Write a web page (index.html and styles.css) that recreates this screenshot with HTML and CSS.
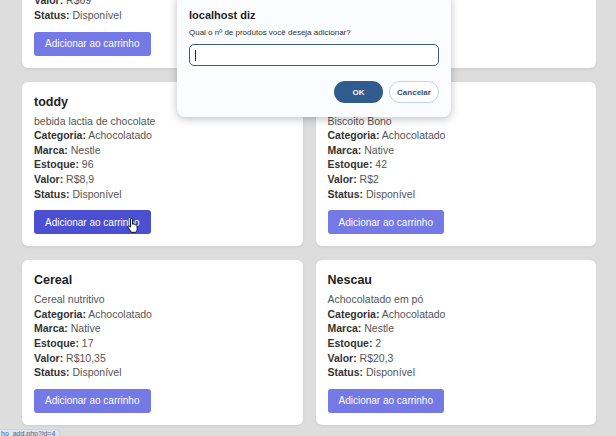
FILE: index.html
```html
<!DOCTYPE html>
<html lang="pt-BR">
<head>
<meta charset="utf-8">
<title>Produtos</title>
<link rel="stylesheet" href="styles.css">
</head>
<body>
<main class="grid">
  <article class="card">
    <h3 class="title">Leite</h3>
    <p class="line">Leite integral</p>
    <p class="line"><b>Categoria:</b> Laticínio</p>
    <p class="line"><b>Marca:</b> Nestle</p>
    <p class="line"><b>Estoque:</b> 10</p>
    <p class="line"><b>Valor:</b> R$69</p>
    <p class="line"><b>Status:</b> Disponível</p>
    <button class="btn">Adicionar ao carrinho</button>
  </article>
  <article class="card">
    <h3 class="title">Café</h3>
    <p class="line">Café torrado</p>
    <p class="line"><b>Categoria:</b> Café</p>
    <p class="line"><b>Marca:</b> Native</p>
    <p class="line"><b>Estoque:</b> 5</p>
    <p class="line"><b>Valor:</b> R$9</p>
    <p class="line"><b>Status:</b> Disponível</p>
    <button class="btn">Adicionar ao carrinho</button>
  </article>
  <article class="card">
    <h3 class="title">toddy</h3>
    <p class="line">bebida lactia de chocolate</p>
    <p class="line"><b>Categoria:</b> Achocolatado</p>
    <p class="line"><b>Marca:</b> Nestle</p>
    <p class="line"><b>Estoque:</b> 96</p>
    <p class="line"><b>Valor:</b> R$8,9</p>
    <p class="line"><b>Status:</b> Disponível</p>
    <button class="btn btn-hover">Adicionar ao carrinho</button>
  </article>
  <article class="card">
    <h3 class="title">Bono</h3>
    <p class="line">Biscoito Bono</p>
    <p class="line"><b>Categoria:</b> Achocolatado</p>
    <p class="line"><b>Marca:</b> Native</p>
    <p class="line"><b>Estoque:</b> 42</p>
    <p class="line"><b>Valor:</b> R$2</p>
    <p class="line"><b>Status:</b> Disponível</p>
    <button class="btn">Adicionar ao carrinho</button>
  </article>
  <article class="card">
    <h3 class="title">Cereal</h3>
    <p class="line">Cereal nutritivo</p>
    <p class="line"><b>Categoria:</b> Achocolatado</p>
    <p class="line"><b>Marca:</b> Native</p>
    <p class="line"><b>Estoque:</b> 17</p>
    <p class="line"><b>Valor:</b> R$10,35</p>
    <p class="line"><b>Status:</b> Disponível</p>
    <button class="btn">Adicionar ao carrinho</button>
  </article>
  <article class="card">
    <h3 class="title">Nescau</h3>
    <p class="line">Achocolatado em pó</p>
    <p class="line"><b>Categoria:</b> Achocolatado</p>
    <p class="line"><b>Marca:</b> Nestle</p>
    <p class="line"><b>Estoque:</b> 2</p>
    <p class="line"><b>Valor:</b> R$20,3</p>
    <p class="line"><b>Status:</b> Disponível</p>
    <button class="btn">Adicionar ao carrinho</button>
  </article>
</main>

<div class="dialog">
  <div class="dlg-title">localhost diz</div>
  <div class="dlg-text">Qual o nº de produtos você deseja adicionar?</div>
  <div class="dlg-input"><span class="caret"></span></div>
  <div class="dlg-actions">
    <button class="dlg-ok">OK</button>
    <button class="dlg-cancel">Cancelar</button>
  </div>
</div>

<svg class="cursor" width="12" height="15" viewBox="0 0 12 15">
  <path d="M3.5 1.2c0-.6.4-1 1-1s1 .4 1 1v5l.3-.1c.5-.3 1.1-.1 1.4.3.5-.3 1.1-.1 1.4.4.5-.2 1.1 0 1.3.5l.3 3.2c0 1.5-.6 2.8-1.6 3.8H4.3L1.2 9.5c-.3-.5-.2-1.1.3-1.4.4-.3 1-.2 1.3.2l.7.9z" fill="#fff" stroke="#000" stroke-width=".9" stroke-linejoin="round"/>
</svg>

<div class="status">ho_add.php?id=4</div>
</body>
</html>
```

FILE: styles.css
```css
* { box-sizing: border-box; }

html, body {
  margin: 0;
  padding: 0;
  height: 100%;
  overflow: hidden;
}

body {
  background: #dddddd;
  font-family: "Liberation Sans", Arial, sans-serif;
  color: #333;
  position: relative;
}

.grid {
  display: grid;
  grid-template-columns: 1fr 1fr;
  column-gap: 13px;
  row-gap: 14px;
  padding: 0 20px 0 22px;
  margin-top: -97px;
}

.card {
  background: #fff;
  border-radius: 6px;
  padding: 12px;
  box-shadow: 0 1px 3px rgba(0, 0, 0, 0.08);
}

.title {
  margin: 0 0 4px;
  font-size: 12.5px;
  line-height: 16px;
  font-weight: bold;
  color: #222;
}

.line {
  margin: 0;
  font-size: 10.5px;
  line-height: 14.6px;
  color: #555;
}

.line b {
  color: #333;
}

.btn {
  display: block;
  margin-top: 9px;
  height: 24px;
  padding: 0 11px;
  border: none;
  border-radius: 3px;
  background: #7479e6;
  color: #fff;
  font-family: "Liberation Sans", Arial, sans-serif;
  font-size: 10px;
}

.btn-hover {
  background: #4b4fd1;
}

.dialog {
  position: absolute;
  left: 177px;
  top: -8px;
  width: 274px;
  background: #fbfcfe;
  border-radius: 8px;
  box-shadow: 0 2px 8px rgba(0, 0, 0, 0.25);
  padding: 16px 12px 14px;
  display: flex;
  flex-direction: column;
}

.dlg-title {
  font-size: 11px;
  line-height: 14px;
  font-weight: bold;
  color: #222;
}

.dlg-text {
  margin-top: 6px;
  font-size: 8px;
  line-height: 10px;
  color: #333;
}

.dlg-input {
  margin-top: 6px;
  height: 22px;
  width: 250px;
  border: 1.5px solid #3d5b87;
  border-radius: 5px;
  background: #fff;
  display: flex;
  align-items: center;
  padding-left: 5px;
}

.caret {
  width: 1px;
  height: 11px;
  background: #222;
}

.dlg-actions {
  margin-top: 15px;
  display: flex;
  justify-content: flex-end;
  gap: 6px;
}

.dlg-ok,
.dlg-cancel {
  height: 22px;
  border-radius: 11px;
  font-family: "Liberation Sans", Arial, sans-serif;
  font-size: 8px;
  font-weight: bold;
  padding: 0;
}

.dlg-ok {
  width: 49px;
  background: #2f5b8e;
  color: #fff;
  border: none;
}

.dlg-cancel {
  width: 50px;
  background: #fff;
  color: #2f4f78;
  border: 1px solid #c3d2ea;
}

.cursor {
  position: absolute;
  left: 127px;
  top: 218px;
}

.status {
  position: absolute;
  left: 0;
  bottom: 0;
  height: 7px;
  width: 60px;
  background: #dfe6f1;
  border: 1px solid #c9d3e2;
  border-left: none;
  border-bottom: none;
  border-top-right-radius: 3px;
  font-size: 7px;
  line-height: 7px;
  color: #4a5d7a;
  padding-left: 1px;
  overflow: hidden;
  white-space: nowrap;
}
```
